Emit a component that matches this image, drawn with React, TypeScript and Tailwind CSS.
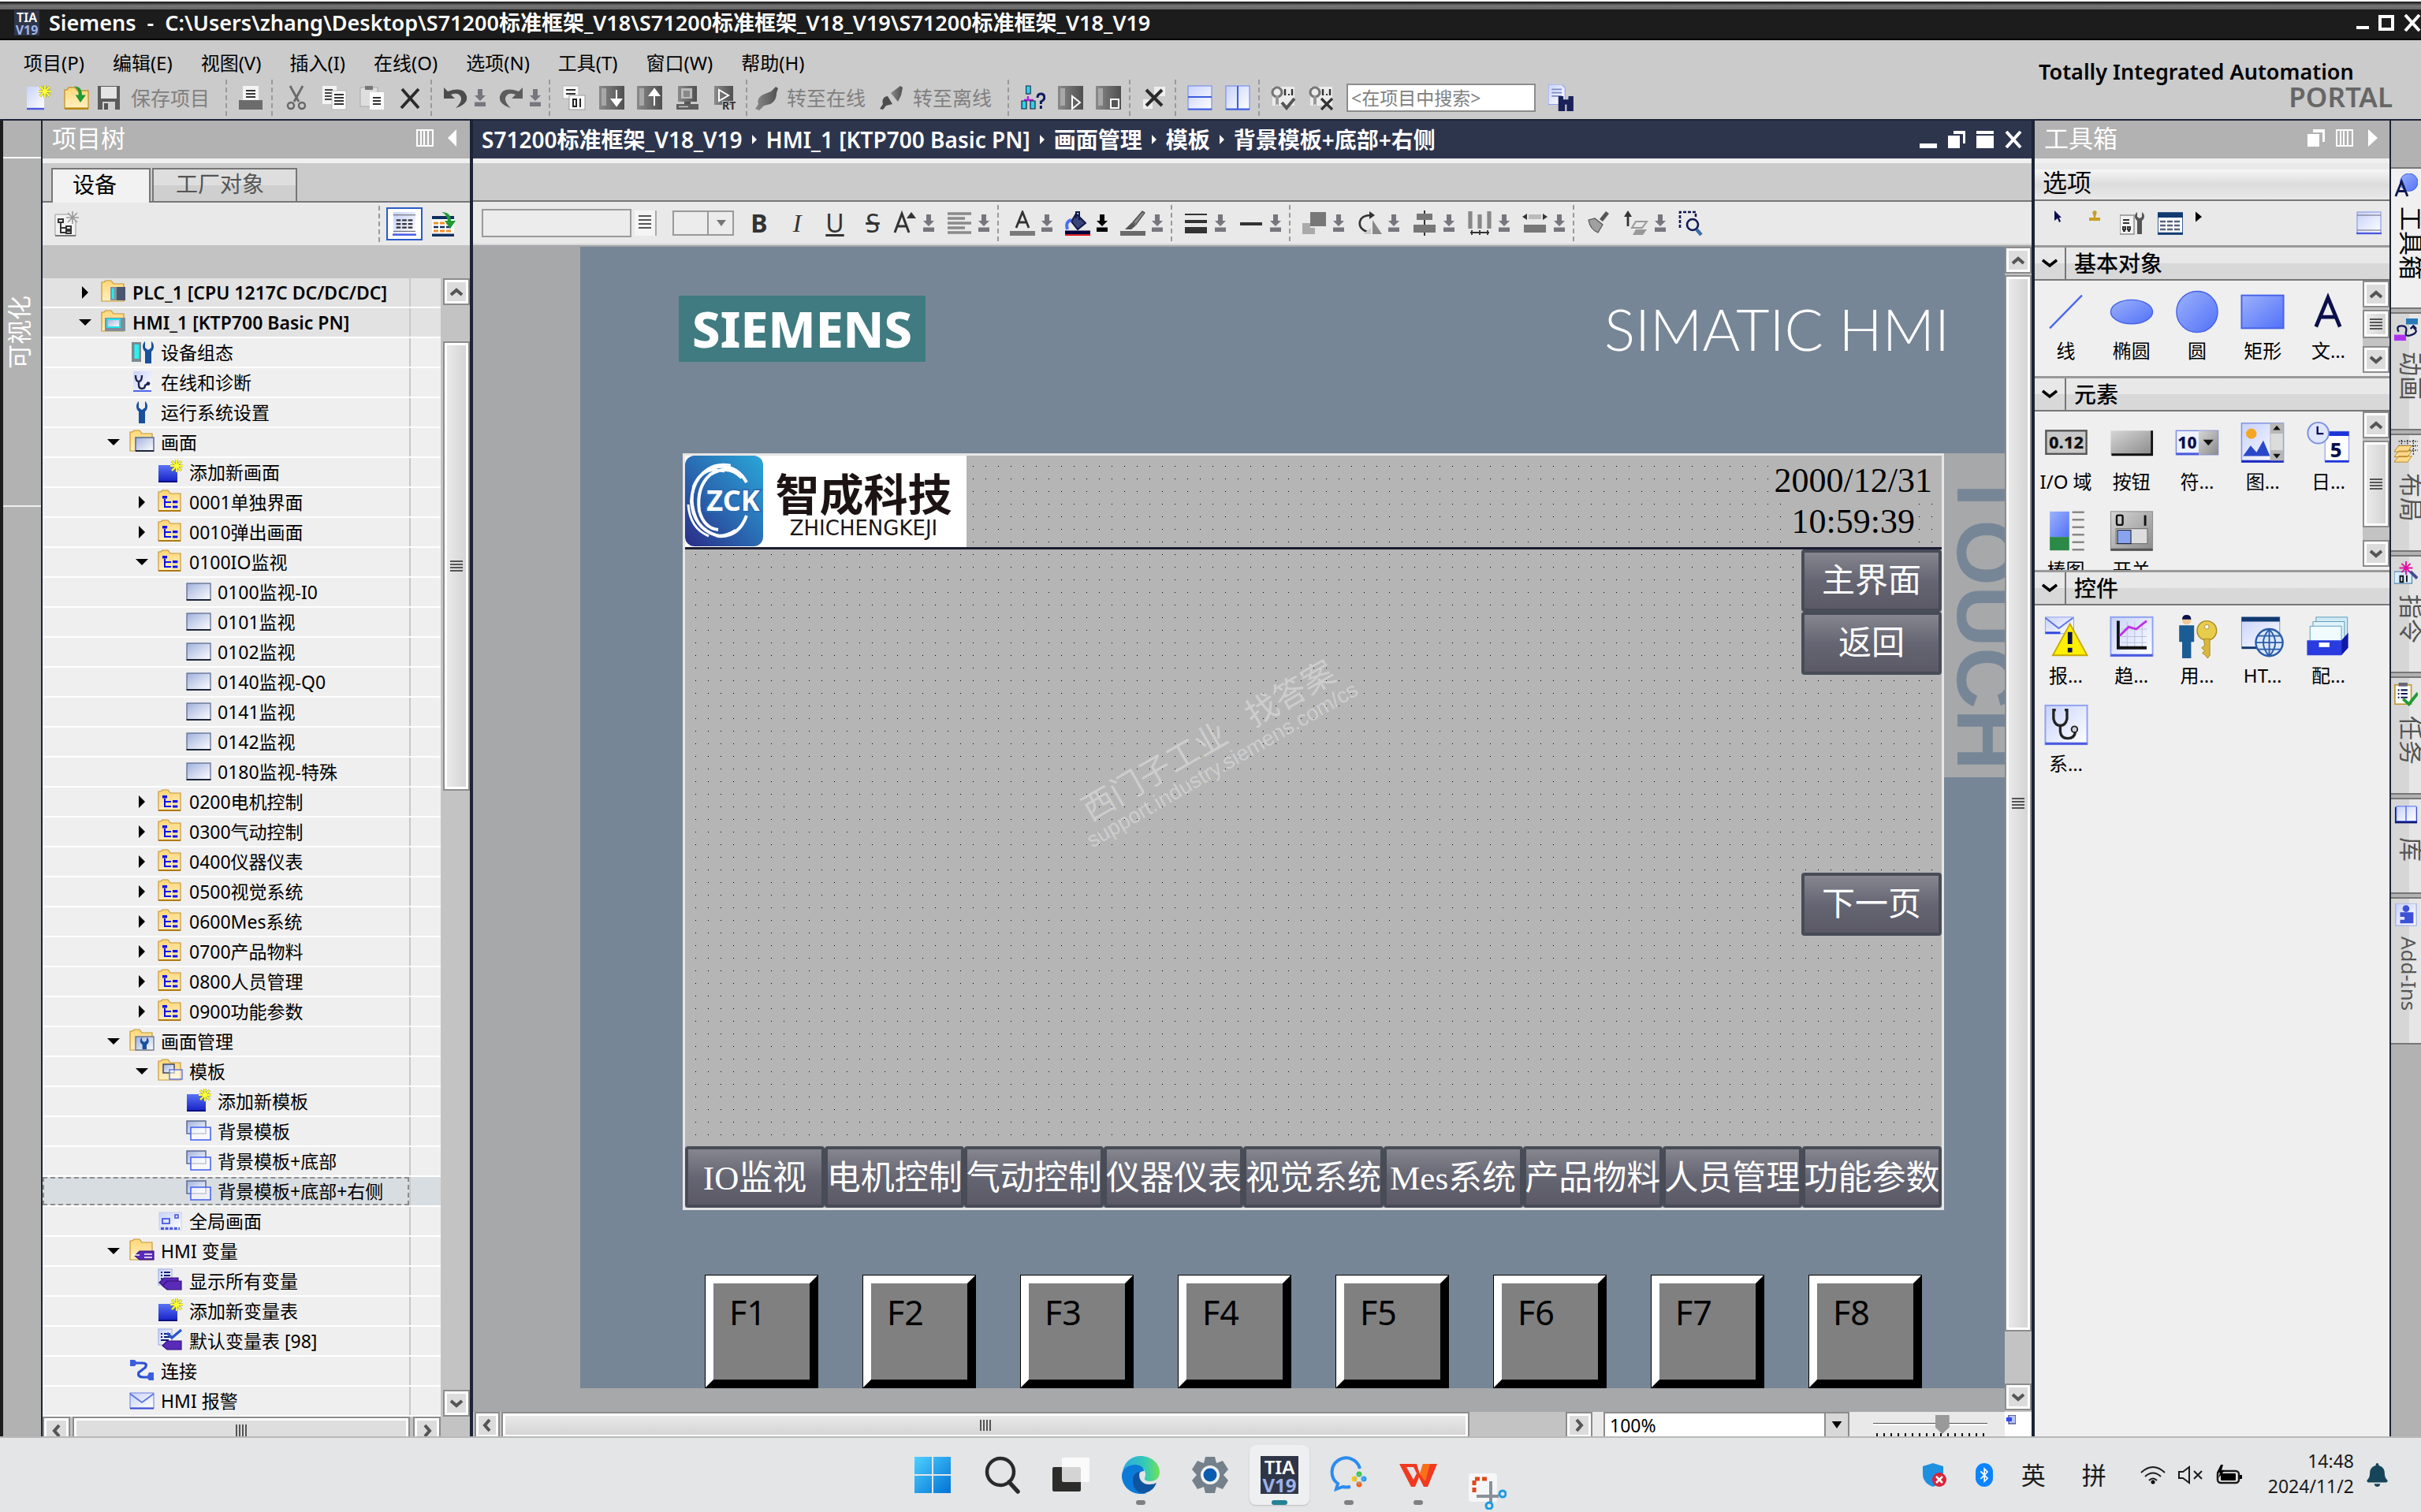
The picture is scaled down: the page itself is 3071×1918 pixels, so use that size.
import type { ReactNode } from 'react'
import clsx from 'clsx'
import { FaBell, FaBluetoothB } from 'react-icons/fa'

/* ---------- icons ---------- */

// shared gradients, referenced by id from the icons below
function Gradients() {
  return (
    <svg width="0" height="0" className="absolute" aria-hidden="true">
      <defs>
        <linearGradient id="folder" x1="0" y1="0" x2="0" y2="1">
          <stop offset="0" stopColor="#ffd778" />
          <stop offset="1" stopColor="#fff0c0" />
        </linearGradient>
        <linearGradient id="sheet" x1="0" y1="0" x2="1" y2="1">
          <stop offset="0" stopColor="#9fb0dd" />
          <stop offset="1" stopColor="#ffffff" />
        </linearGradient>
        <linearGradient id="paper" x1="0" y1="0" x2="1" y2="1">
          <stop offset="0" stopColor="#c8d2fb" />
          <stop offset="1" stopColor="#ffffff" />
        </linearGradient>
        <linearGradient id="shape" x1="0" y1="0" x2="1" y2="1">
          <stop offset="0" stopColor="#9cb2fb" />
          <stop offset="1" stopColor="#5271f8" />
        </linearGradient>
        <linearGradient id="newblue" x1="0" y1="0" x2="0" y2="1">
          <stop offset="0" stopColor="#5a72f5" />
          <stop offset="1" stopColor="#1722c8" />
        </linearGradient>
        <linearGradient id="steel" x1="0" y1="0" x2="1" y2="1">
          <stop offset="0" stopColor="#d6d6d6" />
          <stop offset="1" stopColor="#8b8b8b" />
        </linearGradient>
        <linearGradient id="darksteel" x1="0" y1="0" x2="1" y2="0">
          <stop offset="0" stopColor="#8a8a8a" />
          <stop offset="1" stopColor="#4f4f4f" />
        </linearGradient>
        <linearGradient id="win" x1="0" y1="0" x2="1" y2="1">
          <stop offset="0" stopColor="#4fd0ff" />
          <stop offset="1" stopColor="#0072d4" />
        </linearGradient>
        <linearGradient id="edge" x1="0" y1="0" x2="1" y2="0">
          <stop offset="0" stopColor="#2aa8e0" />
          <stop offset="0.6" stopColor="#35c9b8" />
          <stop offset="1" stopColor="#6fe25a" />
        </linearGradient>
        <linearGradient id="zck" x1="0" y1="1" x2="1" y2="0">
          <stop offset="0" stopColor="#2a2c86" />
          <stop offset="0.5" stopColor="#2a6db4" />
          <stop offset="1" stopColor="#2aa6d8" />
        </linearGradient>
      </defs>
    </svg>
  )
}

const star = <path d="M12 0v8M8 4h8M9 1l6 6M15 1L9 7" stroke="#8f8f1a" strokeWidth="1.5" />
const starTop = <path d="M12 0v8M8 4h8M9 1l6 6M15 1L9 7" stroke="#ffff3c" strokeWidth="0.9" />
const folder = <path d="M.5 13.500V1.500H2l1-1h3.500l1.500 2h6.500v11z" fill="url(#folder)" stroke="#c89632" strokeWidth=".6" />
const wrench = <path d="M10 1v4l2 1.500L14 5V1c2 1.500 2 5 0 6.500V15h-4V7.500C8 6 8 2.500 10 1z" fill="#17509c" />
const tag = <path d="M3 11l3-3h9v5.500H6z" fill="#5a2ab8" stroke="#35107c" strokeWidth=".6" />

const icons: Record<string, ReactNode> = {
  plc: <>{folder}<rect x="6" y="4.500" width="9.500" height="8.500" fill="#4a5670" /><rect x="6" y="4.500" width="4" height="8.500" fill="#8593a0" /><rect x="7" y="5.500" width="1.300" height="6.500" fill="#20f0f0" /></>,
  hmi: <>{folder}<rect x="2.500" y="5" width="13" height="8.500" fill="#7f8d9b" /><rect x="4" y="6" width="8" height="5" fill="url(#sheet)" stroke="#20e4ec" strokeWidth="1" /></>,
  devconf: <><rect x="1.500" y="1.500" width="6" height="12.500" fill="#7a8990" /><rect x="3.200" y="3" width="3" height="9" fill="#2cf0f0" />{wrench}</>,
  diag: <><rect x="2.500" y="1" width="11.500" height="12.500" fill="url(#paper)" /><path d="M2.500 13.500h11.500" stroke="#4a66e8" /><path d="M4 3.500q0 4 2 4t2-4M6 7.500v2q0 2.500 2 2.500t2-2l1.500-1" fill="none" stroke="#1c2450" strokeWidth="1.200" /><circle cx="12" cy="8.800" r="1.200" fill="#1c2450" /></>,
  wrench: <g transform="translate(-4)">{wrench}</g>,
  screens: <>{folder}<rect x="4" y="5" width="11.500" height="8.500" fill="url(#sheet)" stroke="#51608a" strokeWidth=".7" /><path d="M4 13.500h11.500" stroke="#1c2438" /></>,
  add: <><rect x=".5" y="3.500" width="12" height="10.500" fill="url(#newblue)" /><path d="M.5 14h12" stroke="#0a0f80" />{star}{starTop}</>,
  group: <>{folder}<path d="M.5 13.500h14" stroke="#b07810" /><path d="M3 4h3v1.800H3zM9.500 7h3.200v1.600H9.500zM9.500 10.200h3.200v1.600H9.500z" fill="#0c10f0" /><path d="M4.500 6v5h4M4.500 8h4" stroke="#0c10f0" fill="none" /></>,
  screen: <><rect x=".5" y="2.500" width="15" height="10.500" fill="url(#sheet)" stroke="#55648c" strokeWidth=".6" /><path d="M.3 13h15.400" stroke="#1c2438" strokeWidth="1" /></>,
  manage: <>{folder}<rect x="4" y="5" width="11.500" height="8.500" fill="url(#sheet)" stroke="#55648c" strokeWidth=".6" /><path d="M8 5.500v2l1.500 1L11 7.500v-2c2 1 1.500 4 0 4.500v3H8.300v-3C6.500 9 6.500 6.500 8 5.500z" fill="#17509c" /></>,
  templates: <>{folder}<rect x="3.500" y="3.500" width="7" height="5.500" fill="url(#sheet)" stroke="#33405a" strokeWidth=".7" /><rect x="7.500" y="7" width="8" height="6" fill="#ffffff88" stroke="#5c72e0" strokeWidth=".7" /></>,
  template: <><rect x=".5" y="1.500" width="12" height="8" fill="url(#sheet)" stroke="#55648c" strokeWidth=".7" /><rect x="3" y="5.500" width="12.500" height="8" fill="#ffffff99" stroke="#4a66f0" strokeWidth=".8" /></>,
  global: <><rect x="1" y="2.500" width="14" height="11" fill="url(#paper)" stroke="#c0c8e8" strokeWidth=".4" /><rect x="3" y="6.500" width="4.500" height="3" fill="none" stroke="#4a5ae0" strokeWidth=".9" /><rect x="11" y="4" width="2" height="2" fill="none" stroke="#4a5ae0" strokeWidth=".8" /><path d="M2 12.700h12" stroke="#4a5ae0" strokeWidth="1.600" strokeDasharray="2 .8" /></>,
  tags: <>{folder}<g transform="translate(.5 0)">{tag}<path d="M1.500 10.500H6M9 10h5M9 12h5" stroke="#fff" strokeWidth=".7" /></g></>,
  alltags: <><rect x=".5" y=".5" width="8.500" height="10" fill="url(#paper)" stroke="#98a8e0" strokeWidth=".5" /><path d="M2 2.500h1M4 2.500h4M2 4.500h1M4 4.500h4M2 6.500h1M4 6.500h3" stroke="#101870" /><g transform="translate(-2 -2)">{tag}</g>{tag}</>,
  deftags: <><rect x=".5" y=".5" width="8.500" height="10" fill="url(#paper)" stroke="#98a8e0" strokeWidth=".5" /><path d="M2 3.500h1M4 3.500h4M2 5.500h1M4 5.500h4M2 7.500h5" stroke="#101870" /><path d="M6 3l3 3 6-5" fill="none" stroke="#2a56c8" strokeWidth="1.600" />{tag}</>,
  link: <><path d="M3 3h5q4 0 2 3l-4 3q-1 3 3 3h4" fill="none" stroke="#2c50d0" strokeWidth="1.600" /><path d="M.5 1h3l1.500 2-1.500 2h-3zM15.500 9h-3L11 12l1.500 2h3z" fill="#3c5ce0" /></>,
  mail: <><rect x=".5" y="3" width="15" height="9.500" fill="url(#paper)" stroke="#7c90e0" strokeWidth=".6" /><path d="M.5 3.500L8 9l7.500-5.500" fill="none" stroke="#5a74e0" strokeWidth=".9" /><path d="M.5 12.800h15" stroke="#3c50d0" /></>,
  newproj: <><path d="M.5 1h8l3 3v11H.5z" fill="url(#paper)" /><path d="M.5 15h11" stroke="#4a5ae0" strokeWidth="1.200" />{star}{starTop}</>,
  open: <><path d="M.5 14.500V3H2l1-1.500h4L8.500 3.500h7v11z" fill="url(#folder)" stroke="#c89632" strokeWidth=".7" /><path d="M.5 15h15" stroke="#b88a10" /><path d="M6.500.8q5 0 5 5.500h2.500L10.500 11 7.300 6.300h2Q9.500 2.500 6.500.8z" fill="#1f9a34" /></>,
  save: <><rect x="1" y=".5" width="14" height="15" fill="#5c5c5c" /><rect x="3" y="1" width="10" height="7.500" fill="#e4e4e4" /><rect x="4" y="10.500" width="8" height="5" fill="#d0d0d0" /><rect x="5" y="11.500" width="2.500" height="4" fill="#555" /></>,
  print: <><rect x="3" y=".5" width="10" height="11" fill="#f4f4f4" /><path d="M5 3.500h6M5 5.500h6M5 7.500h6" stroke="#333" /><rect x=".5" y="9.500" width="15" height="6" fill="#6c6c6c" /></>,
  cut: <><path d="M4 .5l5.500 10M12 .5l-5.500 10" stroke="#6a6a6a" strokeWidth="1.400" /><circle cx="4.500" cy="13" r="2" fill="none" stroke="#666" strokeWidth="1.200" /><circle cx="11.500" cy="13" r="2" fill="none" stroke="#666" strokeWidth="1.200" /></>,
  copy: <><rect x=".5" y=".5" width="9" height="11.500" fill="#f4f4f4" /><path d="M2 3h5M2 5h5M2 7h5M2 9h5" stroke="#444" /><rect x="6.500" y="3.500" width="9" height="12" fill="#fafafa" stroke="#aaa" strokeWidth=".4" /><path d="M8 6h6M8 8h6M8 10h6M8 12h6" stroke="#333" /></>,
  paste: <><rect x=".5" y="1.500" width="11" height="12" fill="#dedede" stroke="#aaa" strokeWidth=".5" /><rect x="3.500" y=".5" width="5" height="2.500" fill="#777" /><rect x="6.500" y="4.500" width="9" height="11" fill="#fafafa" /><path d="M8.500 8h5M8.500 10h5M8.500 12h5" stroke="#333" /></>,
  del: <path d="M3 2.500l10.500 12M13.500 2.500L2.500 14.500" stroke="#2a2a2a" strokeWidth="1.900" />,
  undo: <path d="M.5 1.500v7h7L5 6q5-2 6.500 2 .5 3-3.500 6.500 8-2.500 7-7.500Q13 .5 3 4z" fill="#4c4c4c" />,
  redo: <path d="M15.500 1.500v7h-7L11 6Q6 4 4.500 8q-.5 3 3.500 6.500Q0 12 1 7 3 .5 13 4z" fill="#5c5c5c" />,
  compile: <><rect x="1" y=".5" width="10" height="8" fill="#f6f6f6" stroke="#aaa" strokeWidth=".4" /><path d="M3 3h6M3 5.500h6" stroke="#333" /><rect x="5" y="6.500" width="10" height="9" fill="#fafafa" stroke="#888" strokeWidth=".4" /><path d="M7.500 9h2v4.500h-2zM12 8.500v5.500" stroke="#222" fill="none" /></>,
  download: <><rect x="0" y=".5" width="16" height="15" fill="url(#darksteel)" /><rect x="1.500" y="2" width="3" height="11" fill="#a8a8a8" /><path d="M11 3v7M11 13l-3-4h6z" stroke="#fff" fill="#fff" /></>,
  upload: <><rect x="0" y=".5" width="16" height="15" fill="url(#darksteel)" /><rect x="1.500" y="2" width="3" height="11" fill="#a8a8a8" /><path d="M11 13V6M11 2.500l-3 4h6z" stroke="#fff" fill="#fff" /></>,
  simulate: <><rect x="2" y=".5" width="12" height="10" fill="url(#darksteel)" /><rect x="4" y="2" width="7" height="6.500" fill="#bbb" /><rect x="5.500" y="3.500" width="4" height="4" fill="#888" /><path d="M6 10.500h4v1.500H6z" fill="#555" /><rect x="1" y="12" width="14" height="3.500" fill="#5e5e5e" /><path d="M2.500 13.700h6" stroke="#ccc" strokeWidth=".7" /></>,
  rt: <><rect x="1" y=".5" width="12" height="12" fill="url(#darksteel)" /><path d="M4 3l6 3.500L4 10z" fill="none" stroke="#fff" /><text x="6" y="15.500" fontSize="7" fontWeight="700" fill="#333" stroke="#cbcbcb" strokeWidth="1" paintOrder="stroke">RT</text></>,
  online: <path d="M1 15l2-3c-1-3 1-5 3-6l5-2 3-3 1.500 1-1 3c0 4-2 6-4 7l-4 1-3 3z" fill="url(#darksteel)" />,
  offline: <><path d="M1 15l2-3c-1-3 1-5 3-5l3 5-4 1-2 2.500z" fill="#4c4c4c" /><path d="M8 5l6-4.500 1.500 1-1 5-2 4z" fill="url(#darksteel)" /></>,
  net: <><path d="M5 1v5M5 7v2.500M2.500 9.500h6" stroke="#b020e0" strokeWidth="1.200" /><rect x="3.800" y=".5" width="2.800" height="5" fill="#30d0e8" stroke="#124" strokeWidth=".5" /><path d="M1 10h3v5H1zM6.500 10h3v5h-3z" fill="#30d0e8" stroke="#124" strokeWidth=".6" /><path d="M11 8q0-2.500 2.200-2.500T15.400 8q0 1.500-2.200 2.500v1.500M13.200 13v2" fill="none" stroke="#101a60" strokeWidth="1.500" /></>,
  start: <><rect x="0" y=".5" width="16" height="15" fill="url(#darksteel)" /><rect x="1.500" y="2" width="3" height="11" fill="#a8a8a8" /><path d="M9 7l5 4-5 4z" fill="none" stroke="#fff" /></>,
  stop: <><rect x="0" y=".5" width="16" height="15" fill="url(#darksteel)" /><rect x="1.500" y="2" width="3" height="11" fill="#a8a8a8" /><rect x="9.500" y="9" width="5" height="5.500" fill="#555" stroke="#fff" /></>,
  cross: <><rect x="8" y="1" width="7" height="6" fill="#eee" /><rect x="1" y="9" width="6" height="6" fill="#eee" /><path d="M3 3l10 10M13 3L3 13" stroke="#2a2a2a" strokeWidth="2" /></>,
  splith: <><rect x=".5" y=".5" width="15" height="15" fill="url(#paper)" stroke="#7c90f0" strokeWidth=".6" /><path d="M.5 7.500h15M.5 15.200h15" stroke="#3c5ce0" /></>,
  splitv: <><rect x=".5" y=".5" width="15" height="15" fill="url(#paper)" stroke="#7c90f0" strokeWidth=".6" /><path d="M8 .5v15M.5 15.200h15" stroke="#3c5ce0" /></>,
  refcheck: <><rect x="1" y="1" width="14" height="12" fill="#ececec" /><circle cx="4" cy="4.500" r="3" fill="none" stroke="#777" strokeWidth="1.600" /><path d="M3 7v6l1-1 1 1V7z" fill="#999" /><path d="M9 2.500v4M13.500 2.500v4" stroke="#333" strokeWidth="1.200" /><path d="M11 5.500h1v1h-1z" fill="#333" /><path d="M7 11l3 3.500 5-6" fill="none" stroke="#555" strokeWidth="2" /></>,
  refx: <><rect x="1" y="1" width="14" height="12" fill="#ececec" /><circle cx="4" cy="4.500" r="3" fill="none" stroke="#777" strokeWidth="1.600" /><path d="M3 7v6l1-1 1 1V7z" fill="#999" /><path d="M9 2.500v4M13.500 2.500v4" stroke="#333" strokeWidth="1.200" /><path d="M11 5.500h1v1h-1z" fill="#333" /><path d="M8 8.500l7 7M15 8.500l-7 7" stroke="#333" strokeWidth="1.600" /></>,
  find: <><path d="M0 0h8l2 2v10H0z" fill="url(#paper)" stroke="#8ea0f0" strokeWidth=".5" /><path d="M2 3h6M2 5h6M2 7h6" stroke="#7c8cc0" strokeWidth=".8" /><path d="M6 7h3v2h3V7h3v9h-4v-4h-1v4H6z" fill="#1a2058" /></>,
  align: <path d="M.5 2h15M.5 5h11M.5 8h15M.5 11h11M.5 14h15" stroke="#8a8a8a" strokeWidth="1.800" />,
  fontcolor: <><path d="M4 11L8 1l4 10M5.500 7.500h5" fill="none" stroke="#333" strokeWidth="1.400" /><path d="M0 14.500h16" stroke="#7a7a7a" strokeWidth="3" /></>,
  fill: <><path d="M7 2l6 6-5 4-4-5z" fill="#3a4478" stroke="#101848" /><path d="M7 5V1h2v5" fill="none" stroke="#101848" /><path d="M4 6q-4 1-2.500 6" fill="none" stroke="#4a70f0" strokeWidth="2" /><path d="M0 14h16" stroke="#00003c" strokeWidth="2.500" /><path d="M0 15.600h16" stroke="#f00000" strokeWidth=".8" /></>,
  brush: <><path d="M14 .5l1.500 1L10 9 8 7.500z" fill="#888" stroke="#444" strokeWidth=".6" /><path d="M7.500 7.500l2.500 2-3 2.500H3z" fill="#555" /><path d="M0 14.500h16" stroke="#6a6a6a" strokeWidth="3" /></>,
  lines: <><path d="M1 2.500h14" stroke="#333" /><path d="M1 7h14" stroke="#333" strokeWidth="2" /><path d="M1 12.500h14" stroke="#333" strokeWidth="4" /></>,
  dash: <path d="M1 8.500h14" stroke="#333" strokeWidth="2" />,
  order: <><rect x="5.500" y="1" width="10" height="9" fill="#777" /><path d="M.5 8h5v3h3v4h-8z" fill="#aaa" /></>,
  rotate: <><path d="M8 14Q1 12 2 7q1-4 7-4" fill="none" stroke="#333" strokeWidth="1.300" /><path d="M8 .5l3.500 2.500L8 5.500z" fill="#333" /><path d="M10 6v9h6z" fill="#888" /><path d="M9 11v4H4z" fill="#ccc" /></>,
  center: <><path d="M8 0v16" stroke="#333" /><rect x="3" y="2" width="10" height="4" fill="#777" /><rect x="1" y="9" width="14" height="5" fill="#777" /></>,
  space: <><path d="M2 .5v11M8 2.500v9M14 .5v11" stroke="#888" strokeWidth="2.600" /><path d="M2 14h12M3 12.500v3M13 12.500v3M8 12.500v3" stroke="#333" strokeWidth=".9" /></>,
  width: <><path d="M0 4l3-2v4zM16 4l-3-2v4z" fill="#333" /><rect x="4" y="2.500" width="8" height="3" fill="#bbb" /><rect x="1" y="9" width="14" height="5" fill="#777" /></>,
  painter: <><path d="M13 .5l2 1.500-4 5L9 5.500z" fill="#555" /><path d="M2 6l4-1 5 4-3 5q-5-2-6-8z" fill="#a0a0a0" stroke="#555" strokeWidth=".6" /></>,
  flip: <><path d="M3 10V3" stroke="#333" strokeWidth="1.400" /><path d="M3 0L.5 4h5z" fill="#333" /><path d="M8 7h7l-3 4H5.500z" fill="none" stroke="#999" /><path d="M8 12h7l-2.500 3.500H6z" fill="#999" /></>,
  zoomsel: <><path d="M1 11V1h10v3" fill="none" stroke="#101858" strokeWidth="1.300" strokeDasharray="2 1" /><circle cx="9" cy="9" r="3.500" fill="#e9e9e9" stroke="#101858" strokeWidth="1.300" /><path d="M11.500 12l3 3.500" stroke="#3a70a8" strokeWidth="2.200" /></>,
  newdev: <><path d="M1 2h9l4 4v9.500H1z" fill="#f2f2f2" stroke="#999" strokeWidth=".5" /><path d="M1 15.500h13" stroke="#777" /><path d="M3 5h3v2H3zM8 9.500h3v2H8zM8 12.500h3v1.500H8zM4.500 7v6.500H8M4.500 10.500H8" fill="none" stroke="#333" /><path d="M12 0v8M8 4h8M9 1l6 6M15 1L9 7" stroke="#999" strokeWidth=".8" /></>,
  listview: <><rect x=".5" y="0" width="15" height="16" fill="url(#paper)" /><path d="M.5 2h15M.5 13h15" stroke="#555" strokeWidth=".5" /><path d="M2.500 5.500h11M2.500 8h11M2.500 10.500h11" stroke="#333" strokeWidth="1.200" strokeDasharray="3 1" /><path d="M0 15.300h16" stroke="#4a5ae0" strokeWidth="1.300" /></>,
  export: <><rect x="0" y="3" width="14" height="12.500" fill="#fff" /><path d="M0 4h14M0 15.300h14" stroke="#103060" strokeWidth="2" /><path d="M1 7.500h12M1 12.500h12" stroke="#f09030" strokeWidth="1.400" strokeDasharray="3 1" /><path d="M1 10h12" stroke="#103060" strokeWidth="1.200" strokeDasharray="3 1" /><path d="M6 .5q6 0 6 5.500h3L11.500 11 8 6h2Q9.500 2 6 .5z" fill="#1f9a34" /></>,
  tools: <><rect x="0" y="3" width="9" height="12" fill="#f2f2f2" stroke="#777" strokeWidth=".6" /><path d="M2 6h4M2 8h4" stroke="#333" /><path d="M2 10.500h1.500v1.500H2zM5 10.500h1.500v1.500H5zM2 13h1.500M5 13h1.500" stroke="#333" fill="none" /><path d="M11 1v3l1.500 1L14 4V1c2 1.500 2 4 0 5.500V15h-3V6.500C9 5 9 2.500 11 1z" fill="#555" /></>,
  table: <><rect x="0" y="1.500" width="16" height="13.500" fill="#fff" stroke="#103a70" strokeWidth=".8" /><path d="M0 3h16" stroke="#103a70" strokeWidth="3" /><path d="M1.500 7h13M1.500 9.500h13M1.500 12h13" stroke="#55607c" strokeWidth="1.200" strokeDasharray="3.500 1" /><path d="M0 14.500h16" stroke="#103a70" strokeWidth="1.200" /></>,
  blank: <><rect x=".5" y="1" width="15" height="13.500" fill="url(#paper)" stroke="#8ea0e0" strokeWidth=".6" /><path d="M.5 3h15M.5 12.500h15" stroke="#667" strokeWidth=".5" /><path d="M0 14.500h16" stroke="#4a5ae0" strokeWidth="1.200" /></>,
  // task card tabs
  cardTools: <><circle cx="10" cy="6" r="6" fill="url(#shape)" stroke="#3c5ce0" strokeWidth=".5" /><path d="M1 15.500L5 5.500l4 10M2.500 12h5" fill="none" stroke="#101850" strokeWidth="1.500" /></>,
  cardAnim: <><rect x="8" y="0" width="8" height="4" fill="#2878b8" /><rect x="0" y="11" width="8" height="4" fill="#b030f0" /><path d="M3 9q-2-4 2-4t3 4 4 2 1-5M11 7l2-2 2 2" fill="none" stroke="#101850" strokeWidth="1.200" /></>,
  cardLayout: <><path d="M3 1h13M3 4h13M3 7h13M5 0v10M9 0v10M13 0v10" stroke="#222" strokeWidth=".7" strokeDasharray="1 .8" /><path d="M3 4h9l-3 4H0zM3 7.500h9l-3 4H0zM3 11h9l-3 4H0z" fill="#ffd98a" stroke="#b8862a" strokeWidth=".5" /></>,
  cardCmd: <><rect x="0" y="7" width="12" height="8" fill="#d8ecff" stroke="#4a80b0" strokeWidth=".6" /><path d="M4 10h2v4H4zM8.500 9.500V14" fill="none" stroke="#111" /><path d="M8 0v9M3.500 4.500h9M5 1.500l6 6M11 1.500l-6 6" stroke="#e010a0" /><path d="M11 7l4.500 4.500" stroke="#444c90" strokeWidth="2" /></>,
  cardTask: <><rect x=".5" y="1.500" width="11" height="13" fill="#fff" stroke="#c09a30" strokeWidth=".9" /><rect x="3" y="0" width="6" height="2.500" fill="#667" /><path d="M2.500 5h1M4.500 5H9M2.500 7.500h1M4.500 7.500H9M2.500 10h1M4.500 10H9" stroke="#101850" strokeWidth="1.100" /><path d="M6 11l4 3.500L16 7" fill="none" stroke="#1f9a34" strokeWidth="2" /></>,
  cardLib: <><path d="M.5 2h15v11h-15z" fill="#101870" /><path d="M1.500 1.500H8v10H1.500zM8 1.500h7v10H8z" fill="url(#paper)" stroke="#4a66f0" strokeWidth=".5" /></>,
  cardAdd: <><rect x="1" y="0" width="14" height="15" fill="url(#paper)" stroke="#98a8e0" strokeWidth=".6" /><circle cx="8" cy="3.500" r="2.300" fill="#3c50d8" /><path d="M4 6h9v7.500H4v-2.500h3V9H4z" fill="#3c50d8" /></>,
}

function Icon({ name, className = 'size-8' }: { name: string; className?: string }) {
  return (
    <svg viewBox="0 0 16 16" className={clsx('shrink-0', className)} aria-hidden="true">
      {icons[name]}
    </svg>
  )
}

function ToolButton({ name, label }: { name: string; label?: string }) {
  return (
    <button type="button" aria-label={label || name} className="shrink-0">
      <Icon name={name} />
    </button>
  )
}

function DropArrow({ dark }: { dark?: boolean }) {
  return (
    <svg viewBox="0 0 14 22" className={clsx('h-[22px] w-[14px] shrink-0', dark ? 'text-black' : 'text-[#76767e]')} aria-hidden="true">
      <path d="M4 0h6v8h4l-7 7-7-7h4zM0 16.500h14V22H0z" fill="currentColor" />
    </svg>
  )
}

function Drop({ name, dark }: { name: string; dark?: boolean }) {
  return (
    <button type="button" aria-label={name} className="flex shrink-0 items-center gap-2">
      <Icon name={name} />
      <DropArrow dark={dark} />
    </button>
  )
}

function Group({ children, className, last }: { children: ReactNode; className?: string; last?: boolean }) {
  return (
    <div
      className={clsx(
        'flex h-[46px] shrink-0 items-center gap-4',
        className || 'pr-[10px] pl-[14px]',
        !last && 'border-r-2 border-dashed border-[#9a9a9a]',
      )}
    >
      {children}
    </div>
  )
}

function PanelIcon({ kind }: { kind: 'min' | 'restore' | 'max' | 'close' | 'pin' | 'left' | 'right' }) {
  return (
    <button type="button" aria-label={kind}>
      <svg viewBox="0 0 22 22" className="size-[22px] fill-white stroke-white" aria-hidden="true">
        {kind === 'min' && <path d="M0 16h22v6H0z" stroke="none" />}
        {kind === 'restore' && <path d="M7 0h15v16h-3V4H7zM0 6h15v16H0z" stroke="none" />}
        {kind === 'max' && <path d="M0 0h22v4H0zM0 6h22v16H0z" stroke="none" />}
        {kind === 'close' && <path d="M2 1l18 20M20 1L2 21" strokeWidth="4" />}
        {kind === 'pin' && <path d="M1 1h20v20H1zM6 1v20M10 1v20M15 1v20" fill="none" strokeWidth="2" />}
        {kind === 'left' && <path d="M17 0v22L6 11z" stroke="none" />}
        {kind === 'right' && <path d="M5 0v22l12-11z" stroke="none" />}
      </svg>
    </button>
  )
}

/* ---------- scroll bars ---------- */

const scrollPiece = 'shrink-0 border-2 border-[#8c8c8c] shadow-[inset_0_0_0_3px_#fff] flex items-center justify-center'

function ScrollButton({ dir, className }: { dir: 'up' | 'down' | 'left' | 'right'; className?: string }) {
  const paths = {
    up: 'M3 14l7-6 7 6',
    down: 'M3 7l7 6 7-6',
    left: 'M13 3l-6 7 6 7',
    right: 'M7 3l6 7-6 7',
  }
  return (
    <button type="button" aria-label={'Scroll ' + dir} className={clsx(scrollPiece, 'bg-[#dcdcdc]', className)}>
      <svg viewBox="0 0 20 20" className="size-5" aria-hidden="true">
        <path d={paths[dir]} fill="none" stroke="#555" strokeWidth="4" />
      </svg>
    </button>
  )
}

function VScroll({ gap, thumb, className }: { gap: string; thumb: string; className?: string }) {
  return (
    <div className={clsx('flex w-[34px] shrink-0 flex-col bg-[#c3c3c3]', className)}>
      <ScrollButton dir="up" className="h-[34px]" />
      <div className={clsx('shrink-0', gap)} />
      <div className={clsx(scrollPiece, 'bg-linear-to-r from-[#ececec] to-[#d2d2d2]', thumb)}>
        <div className="h-[14px] w-4 bg-[repeating-linear-gradient(#555_0_2px,transparent_2px_4px)]" />
      </div>
      <div className="flex-1" />
      <ScrollButton dir="down" className="h-[34px]" />
    </div>
  )
}

/* ---------- title, menu, main toolbar ---------- */

function TiaLogo({ className }: { className: string }) {
  return (
    <svg viewBox="0 0 48 48" className={className} aria-hidden="true">
      <rect width="48" height="48" fill="#2f3648" />
      <text x="24" y="23" textAnchor="middle" fontSize="24" fontWeight="600" fill="#fff">TIA</text>
      <text x="24" y="46" textAnchor="middle" fontSize="24" fontWeight="700" fill="#9fb2ea">V19</text>
    </svg>
  )
}

function TitleBar() {
  return (
    <header className="shrink-0">
      <div className="h-3 border-t-2 border-white bg-linear-to-b from-[#111] via-[#777] to-[#666]" />
      <div className="flex h-[39px] items-center border-b-2 border-black bg-[#1c1c1c] pb-1 pl-[18px] text-white">
        <TiaLogo className="size-8" />
        <h1 className="ml-3 text-[27px] leading-8 font-semibold whitespace-pre">
          {'Siemens  -  C:\\Users\\zhang\\Desktop\\S71200标准框架_V18\\S71200标准框架_V18_V19\\S71200标准框架_V18_V19'}
        </h1>
        <div className="ml-auto flex items-center gap-3">
          <button type="button" aria-label="Minimize" className="mt-3 h-1 w-4 bg-white" />
          <button type="button" aria-label="Maximize" className="size-5 border-4 border-white" />
          <button type="button" aria-label="Close">
            <svg viewBox="0 0 22 22" className="size-[22px]" aria-hidden="true">
              <path d="M2 1l18 20M20 1L2 21" stroke="#fff" strokeWidth="4" />
            </svg>
          </button>
        </div>
      </div>
    </header>
  )
}

const menus = ['项目(P)', '编辑(E)', '视图(V)', '插入(I)', '在线(O)', '选项(N)', '工具(T)', '窗口(W)', '帮助(H)']

function MenuArea() {
  return (
    <div className="flex h-[102px] shrink-0 border-b-2 border-[#1c2336] bg-[#cbcbcb]">
      <div className="min-w-0 flex-1 overflow-hidden">
        <nav className="flex h-[50px] items-center gap-9 pt-2 pl-[30px] text-[24px] leading-7">
          {menus.map((m) => (
            <button key={m} type="button" className="shrink-0">
              {m}
            </button>
          ))}
        </nav>
        <div className="flex h-[46px] items-center text-[25px] leading-8 text-[#808080]">
          <Group className="pr-5 pl-[33px]">
            <ToolButton name="newproj" label="New project" />
            <ToolButton name="open" label="Open project" />
            <button type="button" className="-ml-[7px] flex items-center gap-3">
              <Icon name="save" />
              保存项目
            </button>
          </Group>
          <Group>
            <ToolButton name="print" />
          </Group>
          <Group>
            <ToolButton name="cut" />
            <ToolButton name="copy" />
            <ToolButton name="paste" />
            <ToolButton name="del" label="Delete" />
          </Group>
          <Group>
            <Drop name="undo" />
            <Drop name="redo" />
          </Group>
          <Group>
            <ToolButton name="compile" />
            <ToolButton name="download" />
            <ToolButton name="upload" />
            <ToolButton name="simulate" />
            <ToolButton name="rt" label="Start runtime" />
          </Group>
          <Group className="pr-5 pl-2">
            <button type="button" className="flex items-center gap-[10px]">
              <Icon name="online" />
              转至在线
            </button>
            <button type="button" className="flex items-center gap-3">
              <Icon name="offline" />
              转至离线
            </button>
          </Group>
          <Group>
            <ToolButton name="net" label="Accessible devices" />
            <ToolButton name="start" label="Start CPU" />
            <ToolButton name="stop" label="Stop CPU" />
          </Group>
          <Group>
            <ToolButton name="cross" label="Cross-references" />
          </Group>
          <Group>
            <ToolButton name="splith" label="Split horizontally" />
            <ToolButton name="splitv" label="Split vertically" />
          </Group>
          <Group last>
            <ToolButton name="refcheck" />
            <ToolButton name="refx" />
            <input
              type="text"
              aria-label="在项目中搜索"
              placeholder="<在项目中搜索>"
              className="h-9 w-[240px] border-2 border-[#8c8c8c] bg-white px-1 text-[23px] leading-8 placeholder:text-[#808080]"
            />
            <button type="button" aria-label="Find">
              <Icon name="find" className="size-[34px]" />
            </button>
          </Group>
        </div>
      </div>
      <div className="flex w-[520px] shrink-0 flex-col pt-[24px] pr-[36px]">
        <p className="pl-[35px] text-[27px] leading-8 font-semibold">Totally Integrated Automation</p>
        <p className="text-right text-[35px] leading-8 font-semibold text-[#666]">PORTAL</p>
      </div>
    </div>
  )
}

/* ---------- project tree ---------- */

type TreeItem = { label: string; icon: string; level: number; open?: boolean; closed?: boolean; device?: boolean; selected?: boolean }

const tree: TreeItem[] = [
  { label: 'PLC_1 [CPU 1217C DC/DC/DC]', icon: 'plc', level: 0, closed: true, device: true },
  { label: 'HMI_1 [KTP700 Basic PN]', icon: 'hmi', level: 0, open: true, device: true },
  { label: '设备组态', icon: 'devconf', level: 1 },
  { label: '在线和诊断', icon: 'diag', level: 1 },
  { label: '运行系统设置', icon: 'wrench', level: 1 },
  { label: '画面', icon: 'screens', level: 1, open: true },
  { label: '添加新画面', icon: 'add', level: 2 },
  { label: '0001单独界面', icon: 'group', level: 2, closed: true },
  { label: '0010弹出画面', icon: 'group', level: 2, closed: true },
  { label: '0100IO监视', icon: 'group', level: 2, open: true },
  { label: '0100监视-I0', icon: 'screen', level: 3 },
  { label: '0101监视', icon: 'screen', level: 3 },
  { label: '0102监视', icon: 'screen', level: 3 },
  { label: '0140监视-Q0', icon: 'screen', level: 3 },
  { label: '0141监视', icon: 'screen', level: 3 },
  { label: '0142监视', icon: 'screen', level: 3 },
  { label: '0180监视-特殊', icon: 'screen', level: 3 },
  { label: '0200电机控制', icon: 'group', level: 2, closed: true },
  { label: '0300气动控制', icon: 'group', level: 2, closed: true },
  { label: '0400仪器仪表', icon: 'group', level: 2, closed: true },
  { label: '0500视觉系统', icon: 'group', level: 2, closed: true },
  { label: '0600Mes系统', icon: 'group', level: 2, closed: true },
  { label: '0700产品物料', icon: 'group', level: 2, closed: true },
  { label: '0800人员管理', icon: 'group', level: 2, closed: true },
  { label: '0900功能参数', icon: 'group', level: 2, closed: true },
  { label: '画面管理', icon: 'manage', level: 1, open: true },
  { label: '模板', icon: 'templates', level: 2, open: true },
  { label: '添加新模板', icon: 'add', level: 3 },
  { label: '背景模板', icon: 'template', level: 3 },
  { label: '背景模板+底部', icon: 'template', level: 3 },
  { label: '背景模板+底部+右侧', icon: 'template', level: 3, selected: true },
  { label: '全局画面', icon: 'global', level: 2 },
  { label: 'HMI 变量', icon: 'tags', level: 1, open: true },
  { label: '显示所有变量', icon: 'alltags', level: 2 },
  { label: '添加新变量表', icon: 'add', level: 2 },
  { label: '默认变量表 [98]', icon: 'deftags', level: 2 },
  { label: '连接', icon: 'link', level: 1 },
  { label: 'HMI 报警', icon: 'mail', level: 1 },
]

const indent = ['pl-[42px]', 'pl-[78px]', 'pl-[114px]', 'pl-[150px]']

function TreeRow({ item }: { item: TreeItem }) {
  return (
    <li
      role="treeitem"
      aria-selected={!!item.selected}
      className={clsx(
        'flex h-[38px] border-b-2 border-white',
        item.selected ? 'bg-[#d8dde1]' : item.device ? 'bg-[#e2e2e2]' : 'bg-[#efefef]',
      )}
    >
      <div
        className={clsx(
          'flex min-w-0 flex-1 items-center',
          indent[item.level],
          item.selected && 'outline-2 -outline-offset-2 outline-dashed outline-[#8c8c8c]',
        )}
      >
        <span className="flex w-8 shrink-0 items-center pl-1">
          {(item.open || item.closed) && (
            <button type="button" aria-label={item.open ? 'Collapse' : 'Expand'}>
              <svg viewBox="0 0 16 16" className="size-4" aria-hidden="true">
                <path d={item.open ? 'M0 4h16l-8 8z' : 'M4 0v16l8-8z'} />
              </svg>
            </button>
          )}
        </span>
        <Icon name={item.icon} />
        <span className={clsx('ml-2 text-[23px] leading-8 whitespace-nowrap', item.device && 'font-semibold')}>
          {item.label}
        </span>
      </div>
      <div className="w-10 shrink-0 border-l-2 border-[#c8c8c8]" />
    </li>
  )
}

function ProjectTree() {
  return (
    <section className="flex w-[546px] shrink-0 flex-col border-r-4 border-[#1c2336] bg-[#c3c3c3]">
      <div className="flex h-12 shrink-0 items-center bg-[#b2b2b2] pr-3 pb-1 pl-3 text-white">
        <h2 className="flex-1 text-[31px] leading-10">项目树</h2>
        <PanelIcon kind="pin" />
        <span className="w-3" />
        <PanelIcon kind="left" />
      </div>
      <div className="h-[6px] shrink-0 bg-[#f0f0f0]" />
      <div role="tablist" className="flex h-[50px] shrink-0 items-end gap-[2px] bg-[#cbcbcb] text-[28px] leading-8 shadow-[inset_0_-2px_0_#777]">
        <button type="button" role="tab" aria-selected="true" className="ml-[11px] h-11 w-[126px] border-2 border-b-0 border-[#777] bg-[#f2f2f2] pr-4 pb-1">
          设备
        </button>
        <button type="button" role="tab" aria-selected="false" className="h-11 w-[184px] border-2 border-[#777] bg-linear-to-b from-[#dedede] from-50% to-[#cfcfcf] to-50% pr-3 pb-1 text-[#555]">
          工厂对象
        </button>
      </div>
      <div className="flex h-[54px] shrink-0 items-center bg-[#e9e9e9] pr-[16px] pl-[14px]">
        <ToolButton name="newdev" label="Add new device" />
        <span className="ml-auto h-[46px] border-l-2 border-dashed border-[#9a9a9a]" />
        <button type="button" aria-label="Details view" className="mr-3 ml-2 border-2 border-[#2a5cc8] bg-white px-[6px] py-1">
          <Icon name="listview" className="size-[30px]" />
        </button>
        <ToolButton name="export" />
      </div>
      <div className="h-[42px] shrink-0" />
      <div className="flex min-h-0 flex-1">
        <div className="flex min-w-0 flex-1 flex-col">
          <ul role="tree" aria-label="项目树">
            {tree.map((item, i) => (
              <TreeRow key={i} item={item} />
            ))}
          </ul>
          <div className="flex h-9 shrink-0 gap-[3px]">
            <ScrollButton dir="left" className="w-[35px]" />
            <div className={clsx(scrollPiece, 'w-[428px] bg-[#dedede]')}>
              <div className="h-4 w-[14px] bg-[repeating-linear-gradient(90deg,#555_0_2px,transparent_2px_4px)]" />
            </div>
            <ScrollButton dir="right" className="ml-auto w-[35px]" />
          </div>
        </div>
        <VScroll gap="h-[46px]" thumb="h-[570px]" className="mb-[25px] ml-[3px]" />
      </div>
    </section>
  )
}

/* ---------- editor ---------- */

const crumbs = ['S71200标准框架_V18_V19', 'HMI_1 [KTP700 Basic PN]', '画面管理', '模板', '背景模板+底部+右侧']

function EditorHeader() {
  return (
    <div className="flex h-12 shrink-0 items-center bg-[#2d354d] pr-3 pl-[11px] text-white">
      <ol className="flex flex-1 items-center text-[28px] leading-10 font-semibold">
        {crumbs.map((c, i) => (
          <li key={c} className="flex items-center whitespace-nowrap">
            {i > 0 && (
              <svg viewBox="0 0 6 12" className="mx-3 h-3 w-[6px]" aria-hidden="true">
                <path d="M0 0l6 6-6 6z" fill="#fff" />
              </svg>
            )}
            {c}
          </li>
        ))}
      </ol>
      <div className="flex gap-[14px]">
        <PanelIcon kind="min" />
        <PanelIcon kind="restore" />
        <PanelIcon kind="max" />
        <PanelIcon kind="close" />
      </div>
    </div>
  )
}

function FormatBar() {
  return (
    <div className="flex h-[57px] shrink-0 items-center border-t-2 border-b-2 border-t-[#777] border-b-[#d8d8d8] bg-[#e9e9e9] pl-[11px] text-[30px] text-[#333]">
      <input type="text" aria-label="Font" className="h-9 w-[190px] border-2 border-[#9a9a9a] bg-[#ececec]" />
      <button type="button" aria-label="Font list" className="ml-1 flex h-8 w-[28px] items-center justify-center border-r-2 border-[#aaa] bg-[#f4f4f4]">
        <span className="h-[20px] w-4 bg-[repeating-linear-gradient(#555_0_2px,transparent_2px_5px)]" />
      </button>
      <div className="relative ml-5">
        <select aria-label="Font size" className="block h-8 w-[78px] appearance-none border-2 border-[#9a9a9a] bg-[#ececec]" />
        <svg viewBox="0 0 12 8" className="pointer-events-none absolute top-3 right-[10px] h-2 w-3" aria-hidden="true">
          <path d="M0 0h12L6 8z" fill="#777" />
        </svg>
        <span className="pointer-events-none absolute top-0 right-[32px] h-8 border-l-2 border-[#9a9a9a]" />
      </div>
      <div className="ml-2 flex text-[32px] leading-10">
        <button type="button" className="w-12 font-bold">B</button>
        <button type="button" className="w-12 font-['Liberation_Serif',serif] italic">I</button>
        <button type="button" className="w-12 underline">U</button>
        <button type="button" className="w-12 line-through">S</button>
      </div>
      <Group className="pr-[10px]">
        <button type="button" aria-label="Font growth" className="flex items-center gap-2">
          <svg viewBox="0 0 16 16" className="size-8" aria-hidden="true">
            <path d="M2 14L6.500 2 11 14M3.500 10h6" fill="none" stroke="#333" strokeWidth="1.500" />
            <path d="M12.500 1l3 4h-6z" fill="#333" />
          </svg>
          <DropArrow />
        </button>
        <Drop name="align" />
      </Group>
      <Group>
        <Drop name="fontcolor" />
        <Drop name="fill" dark />
        <Drop name="brush" />
      </Group>
      <Group>
        <Drop name="lines" />
        <Drop name="dash" />
      </Group>
      <Group>
        <Drop name="order" />
        <Drop name="rotate" />
        <Drop name="center" />
        <Drop name="space" />
        <Drop name="width" />
      </Group>
      <Group last>
        <ToolButton name="painter" />
        <Drop name="flip" />
        <ToolButton name="zoomsel" label="Zoom to selection" />
      </Group>
    </div>
  )
}

const hmiButton =
  'rounded-[4px] border-4 border-[#474c57] bg-linear-to-b from-[#85868e] via-[#656673] to-[#5b5965] text-white whitespace-nowrap flex items-center justify-center'

const bottomButtons = ['IO监视', '电机控制', '气动控制', '仪器仪表', '视觉系统', 'Mes系统', '产品物料', '人员管理', '功能参数']
const fKeys = ['F1', 'F2', 'F3', 'F4', 'F5', 'F6', 'F7', 'F8']

function CompanyLogo() {
  return (
    <div className="flex h-[116px] w-[357px] bg-white">
      <svg viewBox="0 0 100 116" className="h-[116px] w-[100px] shrink-0" aria-hidden="true">
        <rect width="99" height="115" rx="12" fill="url(#zck)" />
        <g fill="none" stroke="#fff">
          <path d="M78 34Q66 12 42 14 10 20 8 58q2 34 34 44 26 2 36-26" strokeWidth="4" />
          <path d="M72 28Q54 10 32 24 14 40 18 70q6 22 24 24" strokeWidth="4" />
          <path d="M58 12Q28 6 12 36 4 64 20 90q20 20 44 4" strokeWidth="2.500" />
          <path d="M4 62q2 30 26 40M10 40Q22 12 50 20" strokeWidth="3" />
        </g>
        <text x="61" y="70" textAnchor="middle" fontSize="36" fontWeight="700" fill="#fff" stroke="#2a6db4" strokeWidth="4" paintOrder="stroke">
          ZCK
        </text>
      </svg>
      <div className="flex flex-1 flex-col items-center pt-4 pr-1 text-[#1c1414]">
        <span className="text-[56px] leading-[64px] font-bold">智成科技</span>
        <span className="font-['DejaVu_Sans',sans-serif] text-[26px] leading-6">ZHICHENGKEJI</span>
      </div>
    </div>
  )
}

function HmiScreen() {
  return (
    <div className="relative flex h-[960px] w-[1600px] shrink-0 flex-col border-3 border-[#e6e6e6] bg-[linear-gradient(90deg,#b5b5b5_15px,transparent_15px),linear-gradient(#b5b5b5_15px,#000_15px)] bg-size-[16px_16px] bg-position-[-2px_-2px] font-['Liberation_Serif','Noto_Sans_CJK_SC',serif]">
      <div className="flex h-[119px] shrink-0 justify-between border-b-3 border-[#1c1b30]">
        <div className="font-['Noto_Sans','Noto_Sans_CJK_SC',sans-serif]">
          <CompanyLogo />
        </div>
        <div className="flex flex-col items-center pt-[6px] pr-[12px] text-[44px] leading-[52px]">
          <span className="bg-[#b5b5b5]">2000/12/31</span>
          <span className="bg-[#b5b5b5]">10:59:39</span>
        </div>
      </div>
      <div className="flex flex-1 flex-col items-end text-[42px] leading-[60px]">
        <button type="button" className={clsx(hmiButton, 'h-[79px] w-[178px]')}>主界面</button>
        <button type="button" className={clsx(hmiButton, 'h-[80px] w-[178px]')}>返回</button>
        <button type="button" className={clsx(hmiButton, 'mt-[251px] h-[80px] w-[178px]')}>下一页</button>
      </div>
      <div className="grid h-[78px] shrink-0 grid-cols-9 text-[43px] leading-[60px]">
        {bottomButtons.map((b) => (
          <button key={b} type="button" className={clsx(hmiButton, 'pt-1')}>
            {b}
          </button>
        ))}
      </div>
      {/* watermark */}
      <div className="pointer-events-none absolute top-[374px] left-[671px] -translate-x-1/2 -translate-y-1/2 -rotate-30 text-center font-['Liberation_Sans','Noto_Sans_CJK_SC',sans-serif] whitespace-pre text-[#cdcdcd]">
        <p className="text-[41px] leading-[42px]">西门子工业{'   '}找答案</p>
        <p className="text-[27px] leading-7">support.industry.siemens.com/cs</p>
      </div>
    </div>
  )
}

function FKey({ label }: { label: string }) {
  return (
    <button
      type="button"
      className="size-[144px] shrink-0 border-11 border-t-white border-r-black border-b-black border-l-white bg-[#808080] pb-12 pl-5 text-left text-[43px] leading-[60px] outline-1 -outline-offset-1 outline-black"
    >
      {label}
    </button>
  )
}

function DevicePanel() {
  return (
    <div className="flex min-h-0 min-w-0 flex-1 overflow-hidden bg-[#a7a8aa] pb-[30px] pl-[136px]">
      <div className="min-w-0 flex-1 bg-[#778696] pt-[62px]">
        <div className="flex h-[84px] items-center justify-between pr-[70px] pl-[125px] text-white">
          <div className="flex h-[84px] w-[313px] items-center justify-center bg-[#3f7b81] text-[63px] leading-[84px] font-extrabold">
            SIEMENS
          </div>
          <div className="font-['Lato','Open_Sans',sans-serif] text-[73px] leading-[84px] font-light">SIMATIC HMI</div>
        </div>
        <div className="mt-[116px] flex pl-[130px]">
          <HmiScreen />
          <div className="h-[411px] min-w-0 flex-1 overflow-hidden bg-[#a7a8aa] pt-5 text-[#778696]">
            <span className="block font-['Liberation_Sans',sans-serif] text-[108px] leading-[108px] font-bold [writing-mode:vertical-rl]">
              TOUCH
            </span>
          </div>
        </div>
        <div className="mt-[82px] flex gap-14 pl-[158px]">
          {fKeys.map((k) => (
            <FKey key={k} label={k} />
          ))}
        </div>
      </div>
    </div>
  )
}

function EditorFooter() {
  return (
    <div className="flex h-[31px] shrink-0 overflow-hidden bg-[#e9e9e9]">
      <div className="flex h-[34px] flex-1 gap-[2px] bg-[#c3c3c3]">
        <ScrollButton dir="left" className="ml-[2px] w-8" />
        <div className={clsx(scrollPiece, 'w-[1228px] bg-linear-to-b from-[#ececec] to-[#d2d2d2]')}>
          <div className="h-[14px] w-[14px] bg-[repeating-linear-gradient(90deg,#555_0_2px,transparent_2px_4px)]" />
        </div>
        <ScrollButton dir="right" className="ml-auto w-[34px]" />
      </div>
      <div className="relative ml-[14px]">
        <select aria-label="Zoom" className="block h-[33px] w-[312px] appearance-none border-2 border-[#8c8c8c] bg-white pl-[6px] text-[23px] leading-7">
          <option>100%</option>
        </select>
        <span className="pointer-events-none absolute top-0 right-0 flex h-[33px] w-8 items-center justify-center border-2 border-[#8c8c8c] bg-[#d8d8d8]">
          <svg viewBox="0 0 14 10" className="h-[9px] w-[14px]" aria-hidden="true">
            <path d="M0 0h14L7 10z" />
          </svg>
        </span>
      </div>
      <div className="relative ml-[30px] w-[145px]">
        <div className="absolute inset-x-0 top-[14px] border-t border-b-2 border-t-[#555] border-b-white" />
        <div className="absolute inset-x-1 top-[27px] h-2 bg-[repeating-linear-gradient(90deg,#111_0_2px,transparent_2px_9px)]" />
        <input
          type="range"
          aria-label="Zoom level"
          defaultValue="62"
          className="absolute inset-x-0 top-1 h-6 w-full appearance-none bg-transparent [&::-webkit-slider-thumb]:h-6 [&::-webkit-slider-thumb]:w-[18px] [&::-webkit-slider-thumb]:appearance-none [&::-webkit-slider-thumb]:bg-[#999] [&::-webkit-slider-thumb]:[clip-path:polygon(0_0,100%_0,100%_65%,50%_100%,0_65%)]"
        />
      </div>
      <div className="ml-[22px] w-[34px] bg-white pt-1 pl-[2px]">
        <svg viewBox="0 0 12 12" className="size-3" aria-hidden="true">
          <rect x="3" y="0" width="9" height="11" fill="#b8c4f0" stroke="#101870" />
          <rect x="0" y="3" width="7" height="5" fill="#2a4af0" />
        </svg>
      </div>
    </div>
  )
}

function Editor() {
  return (
    <main className="flex min-w-0 flex-1 flex-col">
      <EditorHeader />
      <div className="h-[6px] shrink-0 bg-[#f0f0f0]" />
      <div className="h-[47px] shrink-0 bg-[#cbcbcb]" />
      <FormatBar />
      <div className="flex min-h-0 flex-1 border-t-2 border-[#a7a8aa]">
        <DevicePanel />
        <VScroll gap="h-[2px]" thumb="h-[1340px]" className="pb-[2px]" />
      </div>
      <EditorFooter />
    </main>
  )
}

/* ---------- toolbox ---------- */

type Tool = { label: string; art: ReactNode }

const navy = '#0b0f4c'

const basicObjects: Tool[] = [
  { label: '线', art: <path d="M6 50L49 6" stroke="#4a68f0" strokeWidth="2.500" /> },
  { label: '椭圆', art: <ellipse cx="28" cy="28" rx="28" ry="16" fill="url(#shape)" stroke="#4462e8" strokeWidth="1.500" /> },
  { label: '圆', art: <circle cx="28" cy="28" r="27.500" fill="url(#shape)" stroke="#4462e8" strokeWidth="1.500" /> },
  { label: '矩形', art: <rect x="0" y="6" width="56" height="44" fill="url(#shape)" stroke="#4462e8" strokeWidth="2" /> },
  { label: '文…', art: <path d="M12 48L28 9l16 39M18 35h20" fill="none" stroke={navy} strokeWidth="5" /> },
]

const elements: Tool[] = [
  {
    label: 'I/O 域',
    art: <><rect x="1" y="12" width="54" height="31" fill="#c8c8c8" stroke="#555" strokeWidth="2.500" /><text x="28" y="36" textAnchor="middle" fontSize="23" fontWeight="800" fill="#111">0.12</text></>,
  },
  {
    label: '按钮',
    art: <><rect x="0" y="12" width="56" height="32" fill="url(#steel)" /><path d="M1 44h54V12" fill="none" stroke="#111" strokeWidth="3" /></>,
  },
  {
    label: '符…',
    art: <><rect x="0" y="12" width="56" height="32" fill="#eef1ff" stroke="#7a8adc" strokeWidth="1.500" /><rect x="30" y="12" width="26" height="32" fill="url(#steel)" /><path d="M0 43h30" stroke="#4a5ae0" strokeWidth="3" /><path d="M36 24h14l-7 8z" fill="#111" /><text x="2" y="36" fontSize="22" fontWeight="800" fill={navy}>10</text></>,
  },
  {
    label: '图…',
    art: <><rect x="0" y="2" width="56" height="52" fill="url(#paper)" stroke="#7c90e0" strokeWidth="1.500" /><circle cx="13" cy="16" r="7" fill="#f5a623" /><path d="M2 46l10-14 8 9 9-16 9 21z" fill="#2a48c8" /><path d="M0 53h56" stroke="#1a28c0" strokeWidth="3" /><rect x="38" y="2" width="18" height="50" fill="#b8b8b8" /><rect x="39" y="16" width="16" height="22" fill="#dcdcdc" /><path d="M42 11h10l-5-6zM42 43h10l-5 6z" fill="#111" /></>,
  },
  {
    label: '日…',
    art: <><rect x="24" y="13" width="32" height="40" fill="#fff" stroke="#7c90e0" /><path d="M24 16h32" stroke="#1c34d8" strokeWidth="6" /><path d="M24 53h32" stroke="#1c34d8" strokeWidth="3" /><text x="31" y="47" fontSize="27" fontWeight="800" fill={navy}>5</text><circle cx="15" cy="15" r="14" fill="#dfe6ff" stroke="#7c90e0" strokeWidth="2" /><path d="M14 6v10h8" fill="none" stroke={navy} strokeWidth="2.500" /></>,
  },
  {
    label: '棒图',
    art: <><rect x="6" y="2" width="26" height="34" fill="url(#shape)" /><rect x="6" y="36" width="26" height="18" fill="#2b8a48" /><path d="M36 3h16M36 13h16M36 23h16M36 33h16M36 43h16M36 53h16" stroke="#888" strokeWidth="2.500" /></>,
  },
  {
    label: '开关',
    art: <><rect x="0" y="2" width="56" height="52" fill="url(#steel)" stroke="#888" /><path d="M0 53h56" stroke="#555" strokeWidth="3" /><rect x="8" y="7" width="8" height="13" rx="2" fill="none" stroke="#111" strokeWidth="2.500" /><path d="M46 7v14" stroke="#111" strokeWidth="3" /><rect x="7" y="25" width="42" height="20" fill="#ddd" stroke="#666" /><rect x="9" y="27" width="18" height="18" fill="#88a4f0" stroke="#111" /></>,
  },
]

const controls: Tool[] = [
  {
    label: '报…',
    art: <><rect x="0" y="2" width="38" height="22" fill="url(#paper)" stroke="#8ea0f0" /><path d="M0 3l18 14L37 3" fill="none" stroke="#5a74e0" strokeWidth="2" /><path d="M0 23h20" stroke="#2a48e0" strokeWidth="3" /><path d="M33 11L56 53H10z" fill="#fdf000" stroke="#c8a800" strokeWidth="2" /><path d="M33 22v16M33 43v6" stroke={navy} strokeWidth="6" /></>,
  },
  {
    label: '趋…',
    art: <><rect x="0" y="2" width="56" height="52" fill="url(#paper)" stroke="#8ea0f0" strokeWidth="2" /><path d="M14 18h34M14 28h34M14 36h34M22 8v36M32 8v36M42 8v36" stroke="#b8c0d8" /><path d="M10 7v36h38" fill="none" stroke="#111" strokeWidth="4" /><path d="M12 27l12-12 10 3 14-11" fill="none" stroke="#c030e8" strokeWidth="3" /><path d="M0 53h56" stroke="#4a5ae0" strokeWidth="3" /></>,
  },
  {
    label: '用…',
    art: <><circle cx="14" cy="6" r="6" fill="#f0c898" /><path d="M8 5q0-6 6-6t6 6z" fill={navy} /><path d="M4 13h20v22h-4v22H8V35H4z" fill="#1a5c94" /><circle cx="41" cy="20" r="13" fill="#e8cc4c" stroke="#a88a20" strokeWidth="1.500" /><circle cx="41" cy="15" r="3" fill="#fff" stroke="#a88a20" /><path d="M37 31h8v22l-3 4-3-4-4-3 3-3-4-4 4-3z" fill="#d8b83c" stroke="#a88a20" /></>,
  },
  {
    label: 'HT…',
    art: <><rect x="0" y="2" width="51" height="40" fill="url(#paper)" stroke="#7c90c0" /><path d="M0 5h51" stroke="#103a70" strokeWidth="6" /><path d="M0 43h20" stroke="#103a70" strokeWidth="3" /><circle cx="37" cy="36" r="18" fill="#dbe8fa" stroke="#2a5ca8" strokeWidth="2.500" /><path d="M19 36h36M37 18v36M22 27h30M22 45h30M37 18q-16 18 0 36M37 18q16 18 0 36" fill="none" stroke="#2a5ca8" strokeWidth="2" /></>,
  },
  {
    label: '配…',
    art: <><path d="M12 2h42v28H12z" fill="#cfeaf4" stroke="#5a9ab8" /><path d="M8 8h42v26H8z" fill="#e0f4fa" stroke="#5a9ab8" /><path d="M4 14h42v26H4z" fill="#f0fbff" stroke="#5a9ab8" /><path d="M0 33h46v20H0z" fill="#2a3ce0" /><path d="M46 33l9-10v20l-9 10z" fill="#101aa8" /><rect x="16" y="36" width="14" height="6" fill="#fff" /></>,
  },
  {
    label: '系…',
    art: <><rect x="0" y="2" width="56" height="52" fill="url(#paper)" stroke="#8ea0f0" strokeWidth="2" /><path d="M0 53h56" stroke="#4a5ae0" strokeWidth="3" /><path d="M14 8h-3v12q2 9 9 9t9-9V8h-3M20 29v8q1 9 10 9t10-8" fill="none" stroke="#222" strokeWidth="3.500" /><circle cx="39" cy="34" r="4" fill="#ccd" stroke="#222" strokeWidth="2" /></>,
  },
]

function ToolSection({ title, tools, height, scroll }: { title: string; tools: Tool[]; height?: string; scroll?: ReactNode }) {
  return (
    <div className={clsx('flex flex-col border-t-3 border-[#999]', height || 'flex-1')}>
      <button type="button" aria-expanded="true" className="flex h-[42px] shrink-0 items-center border-b-2 border-[#777] bg-linear-to-b from-[#e8e8e8] from-50% to-[#d8d8d8] to-50% text-left">
        <span className="flex h-10 w-10 items-center justify-center border-r-2 border-[#777]">
          <svg viewBox="0 0 20 12" className="h-3 w-5" aria-hidden="true">
            <path d="M1 2l9 7 9-7" fill="none" stroke="#000" strokeWidth="3.500" />
          </svg>
        </span>
        <span className="ml-[10px] text-[28px] leading-9 font-medium">{title}</span>
      </button>
      <div className="flex min-h-0 flex-1 bg-[#efefef]">
        <ul className="grid w-[416px] shrink-0 grid-cols-5 content-start overflow-hidden">
          {tools.map((t) => (
            <li key={t.label} className="h-[112px]">
              <button type="button" className="flex w-full flex-col items-center pt-3 pr-1 text-[24px] leading-7 whitespace-nowrap">
                <svg viewBox="-1 -1 58 59" className="mb-[7px] size-14" aria-hidden="true">
                  {t.art}
                </svg>
                {t.label}
              </button>
            </li>
          ))}
        </ul>
        {scroll}
      </div>
    </div>
  )
}

function Toolbox() {
  return (
    <aside className="flex w-[456px] shrink-0 flex-col border-r-2 border-l-4 border-[#1c2336] bg-[#efefef]">
      <div className="flex h-12 shrink-0 items-center gap-[14px] bg-[#b2b2b2] pr-[10px] pb-1 pl-3 text-white">
        <h2 className="flex-1 text-[31px] leading-10">工具箱</h2>
        <PanelIcon kind="restore" />
        <PanelIcon kind="pin" />
        <PanelIcon kind="right" />
      </div>
      <div className="h-[14px] shrink-0 border-t-6 border-[#f0f0f0] bg-[#e9e9e9]" />
      <h3 className="h-10 shrink-0 border-b-2 border-[#777] bg-linear-to-b from-[#f6f6f6] via-[#dcdcdc] to-[#e9e9e9] pl-[10px] text-[31px] leading-8">选项</h3>
      <div className="flex h-14 shrink-0 items-center gap-4 bg-[#e9e9e9] pr-[10px] pl-4">
        <button type="button" aria-label="Pointer" className="mb-4 w-7">
          <svg viewBox="0 0 12 16" className="ml-2 h-4 w-3" aria-hidden="true">
            <path d="M1 0l9 9H7l2 5-2 1-2-5-4 3z" fill={navy} />
          </svg>
        </button>
        <button type="button" aria-label="Stamp" className="mb-4 w-8">
          <svg viewBox="0 0 16 16" className="ml-2 size-4" aria-hidden="true">
            <path d="M8 0q4 1 2 5l-1 4h6v4H1V9h6L6 5Q4 1 8 0z" fill="#c8a020" />
          </svg>
        </button>
        <ToolButton name="tools" />
        <ToolButton name="table" />
        <svg viewBox="0 0 10 16" className="mb-4 h-4 w-2" aria-hidden="true">
          <path d="M0 0v16l10-8z" />
        </svg>
        <span className="flex-1" />
        <ToolButton name="blank" label="Details" />
      </div>
      <ToolSection title="基本对象" tools={basicObjects} height="h-[166px] shrink-0" scroll={<VScroll gap="h-[3px]" thumb="h-9" className="mb-1" />} />
      <ToolSection title="元素" tools={elements} height="h-[246px] shrink-0" scroll={<VScroll gap="h-[3px]" thumb="h-[110px]" className="mb-1" />} />
      <ToolSection title="控件" tools={controls} />
    </aside>
  )
}

const cards = [
  { label: '工具箱', icon: 'cardTools', height: 'h-[180px]', active: true },
  { label: '动画', icon: 'cardAnim', height: 'h-[150px]' },
  { label: '布局', icon: 'cardLayout', height: 'h-[150px]' },
  { label: '指令', icon: 'cardCmd', height: 'h-[150px]' },
  { label: '任务', icon: 'cardTask', height: 'h-[150px]' },
  { label: '库', icon: 'cardLib', height: 'h-[122px]' },
  { label: 'Add-Ins', icon: 'cardAdd', height: 'h-[187px]', small: true },
]

function TaskCards() {
  return (
    <div role="tablist" aria-orientation="vertical" className="flex w-[38px] shrink-0 flex-col gap-1 overflow-hidden bg-[#b2b2b2] pt-[59px]">
      {cards.map((c) => (
        <button
          key={c.label}
          type="button"
          role="tab"
          aria-selected={!!c.active}
          className={clsx(
            'flex shrink-0 flex-col items-start border-y-2 border-[#777] pt-[6px] pl-1',
            c.height,
            c.active ? 'bg-[#f0f0f0]' : 'bg-linear-to-r from-[#d6d6d6] from-60% to-[#e6e6e6] to-60% text-[#555]',
          )}
        >
          <Icon name={c.icon} className="size-[30px]" />
          <span
            className={clsx(
              'mt-3 ml-[6px] [text-orientation:sideways] [writing-mode:vertical-rl] whitespace-nowrap',
              c.small ? 'text-[26px] leading-[26px]' : 'text-[31px] leading-[32px]',
            )}
          >
            {c.label}
          </span>
        </button>
      ))}
    </div>
  )
}

/* ---------- windows task bar ---------- */

function Taskbar() {
  return (
    <footer className="flex h-24 shrink-0 items-center border-t-2 border-[#b8b8b8] bg-[#e4e5e6] text-[#1a1a1a]">
      <div className="flex-1" />
      <div className="ml-10 flex items-center gap-10">
        <button type="button" aria-label="Start">
          <svg viewBox="0 0 48 48" className="size-12"><path d="M1 1h22v22H1zM25 1h22v22H25zM1 25h22v22H1zM25 25h22v22H25z" fill="url(#win)" /></svg>
        </button>
        <button type="button" aria-label="Search">
          <svg viewBox="0 0 48 48" className="size-12"><circle cx="22" cy="20" r="17" fill="none" stroke="#2a2a2a" strokeWidth="4.500" /><path d="M33 33l11 12" stroke="#2a2a2a" strokeWidth="5.500" strokeLinecap="round" /></svg>
        </button>
        <button type="button" aria-label="Task view">
          <svg viewBox="0 0 48 48" className="size-12"><rect x="0" y="14" width="36" height="31" rx="2" fill="#2c2c2a" /><rect x="12" y="2" width="35" height="31" rx="2" fill="#fff" opacity=".8" /></svg>
        </button>
        <button type="button" aria-label="Edge" className="relative">
          <svg viewBox="0 0 48 48" className="size-12">
            <path d="M1 22C2 8 12 0 24 0c13 0 24 9 24 20 0 9-6 12-12 12-5 0-8-2-7-4 3-6 0-14-10-14C10 14 3 18 1 22z" fill="url(#edge)" />
            <path d="M0 25c0-9 9-14 17-14 7 0 11 4 11 8-9 1-12 9-10 16 2 6 7 10 14 12-3 1-6 1-8 1C11 48 0 38 0 25z" fill="#0c7ad8" />
            <path d="M14 31c0-7 4-11 9-11-3 8 2 16 12 16 4 0 7-1 9-2-3 8-10 13-17 13-8 0-13-7-13-16z" fill="#0f54a0" />
          </svg>
          <span className="absolute -bottom-[14px] left-[18px] h-[6px] w-3 rounded-full bg-[#808080]" />
        </button>
        <button type="button" aria-label="Settings">
          <svg viewBox="0 0 48 48" className="size-12">
            <path d="M18 1h12l2 8 8-3 7 11-6 7 6 7-7 11-8-3-2 8H18l-2-8-8 3L1 31l6-7-6-7L8 6l8 3z" fill="#74808a" />
            <circle cx="24" cy="24" r="12" fill="#f0f3f6" /><circle cx="24" cy="24" r="8.500" fill="#0a5cb0" />
          </svg>
        </button>
        <button type="button" aria-label="TIA Portal V19" className="relative -mx-[14px] rounded-lg bg-[#eeeff0] p-[14px] shadow-[0_1px_2px_#bbb]">
          <TiaLogo className="size-12" />
          <span className="absolute bottom-0 left-7 h-[6px] w-5 rounded-full bg-[#238394]" />
        </button>
        <button type="button" aria-label="WeCom" className="relative">
          <svg viewBox="0 0 48 48" className="size-12">
            <path d="M38 16A18 18 0 1 0 10 35l-2 7 8-3q4 1 10 0" fill="none" stroke="#2a8cf0" strokeWidth="4" />
            <circle cx="37" cy="23" r="3.500" fill="#3cc84c" /><circle cx="43" cy="29" r="3.500" fill="#2a9cf0" /><circle cx="37" cy="36" r="3.500" fill="#f06020" /><circle cx="31" cy="29" r="3.500" fill="#f8c818" />
            <path d="M37 23l6 6-6 7-6-7z" fill="none" stroke="#8ab8c8" strokeWidth="1" />
          </svg>
          <span className="absolute -bottom-[14px] left-[18px] h-[6px] w-3 rounded-full bg-[#808080]" />
        </button>
        <button type="button" aria-label="WPS" className="relative">
          <svg viewBox="0 0 48 48" className="size-12">
            <path d="M0 10h22l4 13 4-13h18L36 39h-5l-6-12-5 12h-5zM9 14l9 16 4-8-4-8z" fill="#f03a20" fillRule="evenodd" />
            <path d="M26 23l4-13h9l-6 22z" fill="#f87018" />
          </svg>
          <span className="absolute -bottom-[14px] left-[18px] h-[6px] w-3 rounded-full bg-[#808080]" />
        </button>
        <button type="button" aria-label="Snipping tool" className="mt-10">
          <svg viewBox="0 0 48 48" className="size-12">
            <rect x="0" y="2" width="36" height="36" rx="3" fill="#f4f6f8" />
            <path d="M7 26V9h18" fill="none" stroke="#e04818" strokeWidth="5" strokeDasharray="6 3" />
            <path d="M28 12v28M10 31h28" stroke="#8a9098" strokeWidth="4" />
            <circle cx="43" cy="28" r="4" fill="none" stroke="#1c9ae0" strokeWidth="3" /><circle cx="26" cy="43" r="4" fill="none" stroke="#1c9ae0" strokeWidth="3" />
          </svg>
        </button>
      </div>
      <div className="flex flex-1 items-center justify-end pr-[42px]">
        <svg viewBox="0 0 32 32" className="mr-9 size-8" aria-hidden="true">
          <path d="M14 1l13 4v10q0 11-13 16Q1 26 1 15V5z" fill="#1e90e0" />
          <circle cx="22" cy="22" r="9" fill="#d8243c" /><path d="M18 18l8 8M26 18l-8 8" stroke="#fff" strokeWidth="2.500" />
        </svg>
        <span className="mr-9 flex h-[30px] w-[22px] items-center justify-center rounded-[11px] bg-[#0a84ff] text-white">
          <FaBluetoothB className="size-5" />
        </span>
        <span className="mr-[46px] text-[31px] leading-10">英</span>
        <span className="mr-[43px] text-[31px] leading-10">拼</span>
        <svg viewBox="0 0 32 24" className="mr-4 h-6 w-8" aria-hidden="true">
          <path d="M1 9q15-14 30 0M6 14q10-9 20 0M11 19q5-5 10 0" fill="none" stroke="#1a1a1a" strokeWidth="2" /><circle cx="16" cy="21" r="2.500" />
        </svg>
        <svg viewBox="0 0 32 24" className="mr-4 h-6 w-8" aria-hidden="true">
          <path d="M1 8h5l8-6v20l-8-6H1zM20 7l10 10M30 7L20 17" fill="none" stroke="#1a1a1a" strokeWidth="2" />
        </svg>
        <svg viewBox="0 0 34 26" className="mr-8 h-[26px] w-[34px]" aria-hidden="true">
          <rect x="2" y="8" width="27" height="15" rx="4" fill="none" stroke="#1a1a1a" strokeWidth="2.500" /><rect x="6" y="11" width="19" height="9" rx="1" /><path d="M30 13h3v5h-3zM6 0L1 10h4l-2 7 8-10H7l2-7z" />
        </svg>
        <div className="mr-4 pb-1 text-right text-[23px] leading-8">
          <p>14:48</p>
          <p>2024/11/2</p>
        </div>
        <FaBell className="h-[30px] w-[27px] text-[#16455a]" />
      </div>
    </footer>
  )
}

export default function App() {
  return (
    <div className="flex h-screen flex-col overflow-hidden bg-[#cbcbcb] font-['Noto_Sans','Noto_Sans_CJK_SC',sans-serif] text-black">
      <Gradients />
      <TitleBar />
      <MenuArea />
      <div className="flex min-h-0 flex-1 overflow-hidden border-l-4 border-[#1c1c1c]">
        <div className="flex w-[50px] shrink-0 flex-col border-r-2 border-[#1c2336] bg-[#b2b2b2]">
          <div className="h-12 border-b-2 border-white" />
          <button type="button" className="flex h-[442px] items-center justify-center border-b-2 border-[#eee] pr-2 text-[31px] leading-8 text-white">
            <span className="rotate-180 [text-orientation:sideways] [writing-mode:vertical-rl]">可视化</span>
          </button>
        </div>
        <ProjectTree />
        <Editor />
        <Toolbox />
        <TaskCards />
      </div>
      <Taskbar />
    </div>
  )
}
